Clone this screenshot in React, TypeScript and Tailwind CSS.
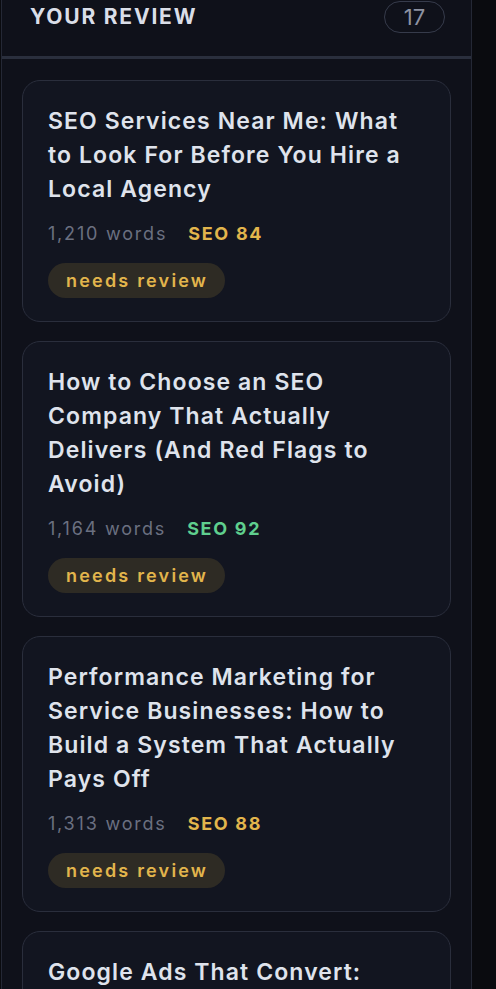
import React from "react";

type Item = { title: string; words: string; seo: number; good: boolean };

const items: Item[] = [
  { title: "SEO Services Near Me: What to Look For Before You Hire a Local Agency", words: "1,210 words", seo: 84, good: false },
  { title: "How to Choose an SEO Company That Actually Delivers (And Red Flags to Avoid)", words: "1,164 words", seo: 92, good: true },
  { title: "Performance Marketing for Service Businesses: How to Build a System That Actually Pays Off", words: "1,313 words", seo: 88, good: false },
  { title: "Google Ads That Convert: What Local Service Businesses Need to Know", words: "1,248 words", seo: 86, good: false },
];

function Card({ item }: { item: Item }) {
  return (
    <div className="shrink-0 rounded-[18px] border border-[#2a2e3c] bg-[#121520] px-[25px] pt-[23px] pb-[23px]">
      <div className="text-[23px] font-semibold leading-[34px] text-[#dfe3ec] tracking-[1.1px]">{item.title}</div>
      <div className="mt-[13px] flex items-center gap-[21px] h-[28px]">
        <span className="text-[18px] text-[#6b7080] tracking-[1.8px]">{item.words}</span>
        <span className={"text-[18px] font-bold tracking-[1.7px] " + (item.good ? "text-[#5fcf8e]" : "text-[#e2b54c]")}>SEO {item.seo}</span>
      </div>
      <div className="mt-[16px] flex">
        <span className="h-[35px] flex items-center rounded-full bg-[#2e2b24] pl-[18px] pr-[17px] text-[18px] font-semibold tracking-[2.2px] text-[#e2b54c]">
          needs review
        </span>
      </div>
    </div>
  );
}

export default function App() {
  return (
    <div className="h-[989px] w-full overflow-hidden bg-[#0a0b0f] flex" style={{ fontFamily: "Inter, 'Noto Sans', sans-serif" }}>
      <div className="ml-[1px] w-[471px] shrink-0 border-x border-[#242835] bg-[#0f111a] flex flex-col">
        <div className="h-[56px] shrink-0 flex items-start">
          <div className="h-[34px] w-full flex items-center justify-between pl-[28px] pr-[26px]">
            <span className="text-[21px] font-bold tracking-[1.8px] text-[#dadee8]">YOUR REVIEW</span>
            <span className="h-[32px] w-[61px] flex items-center justify-center rounded-full border border-[#363b4b] text-[22px] text-[#8d92a1]">17</span>
          </div>
        </div>
        <div className="h-[3px] shrink-0 bg-[#2a2f3d]" />
        <div className="flex flex-col gap-[19px] pt-[21px] pl-[20px] pr-[20px]">
          {items.map((it, i) => (
            <Card key={i} item={it} />
          ))}
        </div>
      </div>
    </div>
  );
}
